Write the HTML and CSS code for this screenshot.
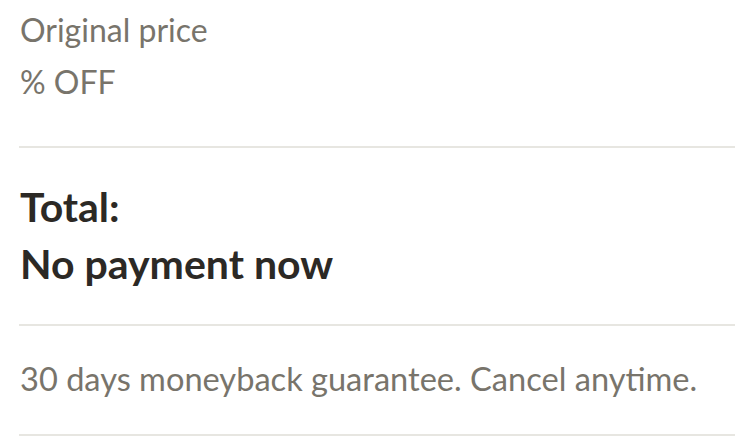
FILE: index.html
```html
<!DOCTYPE html>
<html>
<head>
<meta charset="utf-8">
<link rel="stylesheet" href="styles.css">
</head>
<body>
<div class="summary">
  <div class="prices">
    <div class="row">Original price</div>
    <div class="row">% OFF</div>
  </div>
  <div class="total">
    <div class="total-line">Total:</div>
    <div class="total-line">No payment now</div>
  </div>
  <div class="note">30 days moneyback guarantee. Cancel anytime.</div>
</div>
</body>
</html>
```
FILE: styles.css
```css
html, body {
  margin: 0;
  padding: 0;
  background: #ffffff;
}
body {
  font-family: Lato, "Noto Sans", sans-serif;
  width: 752px;
  height: 436px;
  overflow: hidden;
}
.summary {
  display: flex;
  flex-direction: column;
  padding: 0 17px 0 19px;
}
.prices {
  padding: 4px 0 38px 1px;
  border-bottom: 2px solid #e7e6e1;
}
.row {
  font-size: 32px;
  line-height: 52px;
  color: #78746b;
}
.total {
  padding: 30px 0 32px 1px;
  border-bottom: 2px solid #e7e6e1;
}
.total-line {
  font-size: 41px;
  font-weight: 700;
  line-height: 57px;
  color: #2c2925;
}
.note {
  padding: 28px 0 30px 1px;
  font-size: 32.6px;
  line-height: 50px;
  color: #78746b;
  border-bottom: 2px solid #e7e6e1;
}
```
